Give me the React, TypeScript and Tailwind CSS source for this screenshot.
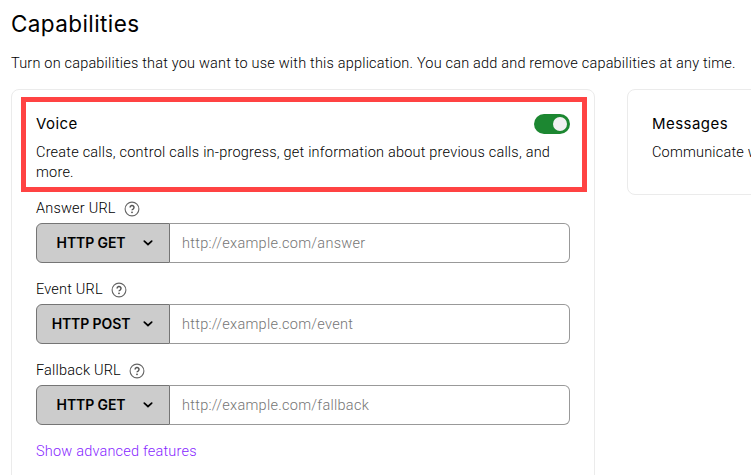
function HelpIcon() {
  return (
    <svg width="16" height="16" viewBox="0 0 16 16" fill="none" className="mt-px shrink-0">
      <circle cx="8" cy="8" r="6.9" stroke="#666" strokeWidth="1.1" />
      <path d="M6.1 6.5a1.95 1.95 0 1 1 3 1.55C8.3 8.5 8 8.7 8 9.3" stroke="#555" strokeWidth="1.5" />
      <circle cx="8" cy="11.3" r="0.9" fill="#555" />
    </svg>
  );
}

function Chevron() {
  return (
    <svg width="10" height="6" viewBox="0 0 10 6" fill="none" className="shrink-0">
      <path d="M1.3 1.1 5 4.5 8.7 1.1" stroke="#000" strokeWidth="1.7" strokeLinecap="round" />
    </svg>
  );
}

function UrlField({ label, method, placeholder }: { label: string; method: string; placeholder: string }) {
  return (
    <div className="h-[81px]">
      <div className="flex h-[25px] gap-2 pt-[2px] leading-5">
        <span className="h-5 -translate-y-px tracking-[0.2px]">{label}</span>
        <HelpIcon />
      </div>
      <div className="flex h-10">
        <button className="flex w-[134px] items-center rounded-l-[6px] border border-[#757575] bg-[#ccc] pr-4">
          <span className="flex-1 pl-[2px] text-center font-['Inter',sans-serif] text-[14px] leading-5 font-semibold tracking-[-0.1px]">
            {method}
          </span>
          <Chevron />
        </button>
        <input
          className="min-w-0 flex-1 rounded-r-[6px] border border-l-0 border-[#999] px-3 pt-[2px] tracking-[0.28px] outline-none placeholder:text-[#757575]"
          placeholder={placeholder}
        />
      </div>
    </div>
  );
}

export default function App() {
  return (
    <main className="h-[475px] w-[751px] overflow-hidden bg-white pt-2 pl-[11px] font-['Roboto',sans-serif] text-[14.5px] leading-5 font-light text-black">
      <h1 className="h-8 font-['Inter',sans-serif] text-[22.5px] leading-8 font-normal tracking-[0.4px]">Capabilities</h1>
      <p className="mt-[14px] h-5 whitespace-nowrap tracking-[0.193px]">
        Turn on capabilities that you want to use with this application. You can add and remove capabilities at any time.
      </p>
      <div className="mt-[15px] flex w-[1200px] items-start gap-8">
        <section className="h-[420px] w-[584px] rounded-[8px] border border-[#ebebeb] pt-[7px] pl-[9px]">
          <div className="h-[95px] w-[566px] border-[5px] border-[#ff4343] pt-3 pr-3 pl-[10px]">
            <div className="flex h-5 items-center justify-between">
              <h2 className="font-['Inter',sans-serif] text-[15px] font-normal tracking-[0.45px]">Voice</h2>
              <div className="flex h-5 w-9 items-center justify-end rounded-full bg-[#1c8731] pr-[3px]">
                <span className="size-[14px] rounded-full bg-[#f1f1f1]" />
              </div>
            </div>
            <p className="mt-[9px] whitespace-nowrap tracking-[0.215px]">
              Create calls, control calls in-progress, get information about previous calls, and
              <br />
              more.
            </p>
          </div>
          <div className="mt-[6px] ml-[15px] w-[534px]">
            <UrlField label="Answer URL" method="HTTP GET" placeholder="http://example.com/answer" />
            <UrlField label="Event URL" method="HTTP POST" placeholder="http://example.com/event" />
            <UrlField label="Fallback URL" method="HTTP GET" placeholder="http://example.com/fallback" />
            <a className="mt-px block tracking-[0.2px] text-[#871fff]">Show advanced features</a>
          </div>
        </section>
        <section className="h-[106px] w-[584px] rounded-[8px] border border-[#ebebeb] px-6 pt-6">
          <h2 className="font-['Inter',sans-serif] text-[15px] font-normal tracking-[0.45px]">Messages</h2>
          <p className="mt-[9px] tracking-[0.19px]">Communicate with your customers over messaging channels.</p>
        </section>
      </div>
    </main>
  );
}
